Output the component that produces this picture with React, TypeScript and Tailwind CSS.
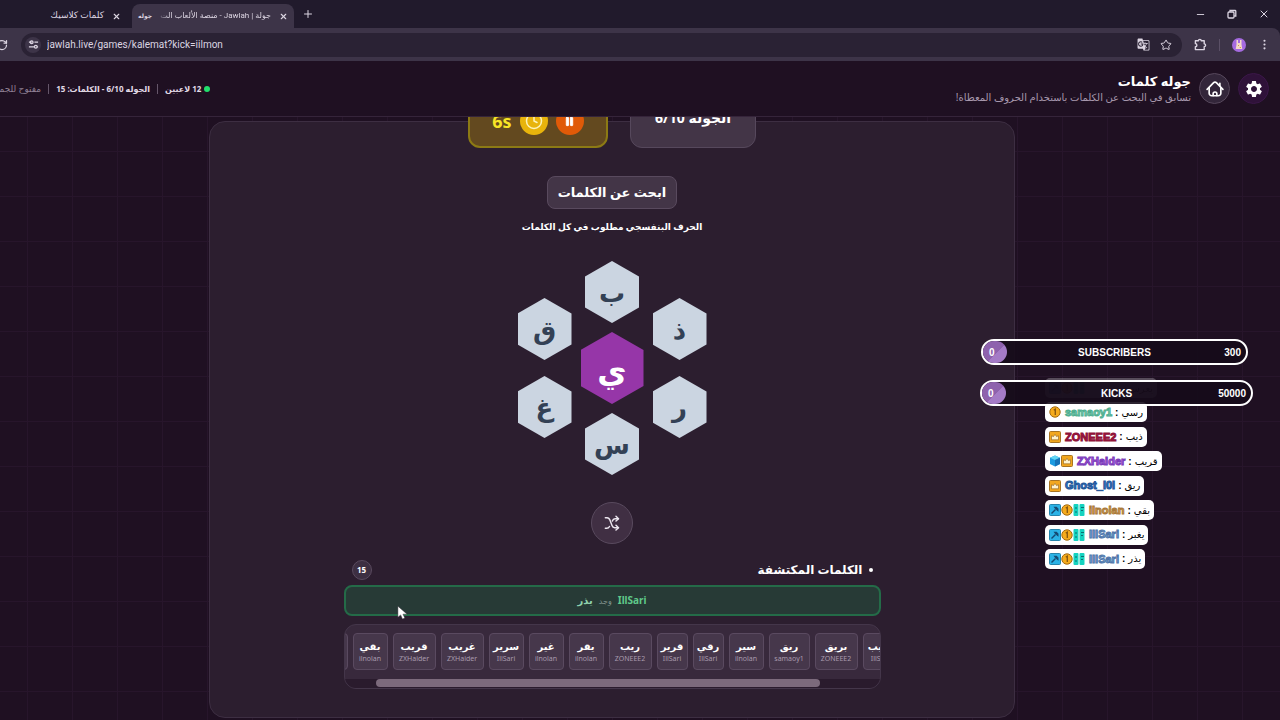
import type { ReactNode } from "react";
import { clsx } from "clsx";
import { Clock, Minus, MoreVertical, Pause, Plus, RotateCw, Star, X } from "lucide-react";
import { MdGTranslate, MdSettings } from "react-icons/md";

type FoundWord = { word: string; player: string; width: string };
type Badge = "coin" | "crown" | "cube" | "tool" | "sub";
type ChatMessage = { player: string; text: string; badges: Badge[]; color: string };

const foundWords: FoundWord[] = [
    { word: "بقر", player: "ilnolan", width: "w-[35px]" },
    { word: "بقي", player: "ilnolan", width: "w-[35px]" },
    { word: "قريب", player: "ZXHaider", width: "w-[43px]" },
    { word: "غريب", player: "ZXHaider", width: "w-[43px]" },
    { word: "سرير", player: "IllSari", width: "w-[35px]" },
    { word: "غير", player: "ilnolan", width: "w-[35px]" },
    { word: "يقر", player: "ilnolan", width: "w-[35px]" },
    { word: "ريب", player: "ZONEEE2", width: "w-[43px]" },
    { word: "قرير", player: "IllSari", width: "w-[31px]" },
    { word: "رقي", player: "IllSari", width: "w-[31px]" },
    { word: "سير", player: "ilnolan", width: "w-[35px]" },
    { word: "ريق", player: "samaoy1", width: "w-[41px]" },
    { word: "بريق", player: "ZONEEE2", width: "w-[43px]" },
    { word: "سيب", player: "IllSari", width: "w-[35px]" },
];

const messages: ChatMessage[] = [
    { player: "samaoy1", text: "رسي", badges: ["coin"], color: "text-[#8fdcc0] [-webkit-text-stroke:1px_#4fae90]" },
    { player: "ZONEEE2", text: "ذيب", badges: ["crown"], color: "text-[#b3123f] [-webkit-text-stroke:1px_#8c1238]" },
    { player: "ZXHaider", text: "قريب", badges: ["cube", "crown"], color: "text-[#b565f0] [-webkit-text-stroke:1px_#7a3bb8]" },
    { player: "Ghost_l0l", text: "ريق", badges: ["crown"], color: "text-[#2f7fd0] [-webkit-text-stroke:1px_#24579a]" },
    { player: "ilnolan", text: "بقي", badges: ["tool", "coin", "sub"], color: "text-[#f0b45c] [-webkit-text-stroke:1px_#a8793a]" },
    { player: "IllSari", text: "يغبر", badges: ["tool", "coin", "sub"], color: "text-[#86b4ea] [-webkit-text-stroke:1px_#5076a8]" },
    { player: "IllSari", text: "يذر", badges: ["tool", "coin", "sub"], color: "text-[#86b4ea] [-webkit-text-stroke:1px_#5076a8]" },
];

function HomeIcon() {
    return (
        <svg viewBox="0 0 24 24" className="size-[18px]" fill="none" stroke="currentColor" strokeWidth="2.2" strokeLinecap="round" strokeLinejoin="round" aria-hidden="true">
            <path d="M1.500 12.500 10.200 3.500a2.500 2.500 0 0 1 3.600 0l8.700 9" />
            <path d="M4.200 10.500v7.200A3.300 3.300 0 0 0 7.500 21h9a3.300 3.300 0 0 0 3.300-3.300v-7.200" />
            <path d="M18.500 8V4.500" />
            <path d="M9.500 20.800v-2.300a2.500 2.500 0 0 1 5 0v2.300" />
        </svg>
    );
}

function ShuffleIcon() {
    return (
        <svg viewBox="0 0 24 24" className="size-4" fill="none" stroke="currentColor" strokeWidth="2.2" strokeLinecap="round" strokeLinejoin="round" aria-hidden="true">
            <path d="M2 4h2.500c2.200 0 3.600 1.300 4.500 3.800l3 8c.8 2.200 2 3.200 4 3.200h5" />
            <path d="M2 20h2c2 0 3.300-.9 4.300-2.800" />
            <path d="M12.500 9c.8-2.200 2-3.500 4-3.500h5" />
            <path d="m18 2 3.800 3.500L18 9M18 15.500l3.800 3.500-3.800 3.500" />
        </svg>
    );
}

function ExtensionIcon() {
    return (
        <svg viewBox="0 0 14 14" className="size-[13px]" fill="none" stroke="currentColor" strokeWidth="1.500" strokeLinejoin="round" aria-hidden="true">
            <path d="M1.500 3h3.300a1.500 1.500 0 0 1 3 0h3.200v3.300a1.500 1.500 0 0 1 0 3V12.500H1.500V9.300a1.600 1.600 0 0 0 0-3.200z" />
        </svg>
    );
}

function BadgeIcon({ kind }: { kind: Badge }) {
    if (kind === "coin") {
        return (
            <svg viewBox="0 0 12 12" className="size-3" aria-hidden="true">
                <circle cx="6" cy="6" r="5.200" fill="#f5ab1c" stroke="#a36a10" strokeWidth="1" />
                <path d="M4.800 4.200 6.300 3.200V9" fill="none" stroke="#8a5a10" strokeWidth="1.400" />
            </svg>
        );
    }
    if (kind === "crown") {
        return (
            <svg viewBox="0 0 12 12" className="size-3" aria-hidden="true">
                <rect x=".5" y=".5" width="11" height="11" rx="1" fill="#f2a71f" stroke="#a87422" />
                <path d="M2.500 8.800V4.800l2 .8L6 3.300l1.500 2.300 2-.8v4z" fill="#fff3cf" stroke="#8a5d1c" strokeWidth=".6" />
            </svg>
        );
    }
    if (kind === "cube") {
        return (
            <svg viewBox="0 0 12 12" className="size-3" aria-hidden="true">
                <path d="m6 .5 5 2.300v6.200l-5 2.500L1 9V2.800z" fill="#1c9be0" />
                <path d="m6 .5 5 2.300L6 5 1 2.800z" fill="#63d6f5" />
                <path d="m6 5 5-2.200V9l-5 2.500z" fill="#1673b8" />
            </svg>
        );
    }
    if (kind === "tool") {
        return (
            <svg viewBox="0 0 12 12" className="size-3" aria-hidden="true">
                <rect x=".5" y=".5" width="11" height="11" rx="1" fill="#2bb3e6" stroke="#2585ad" />
                <path d="M2.500 9.500 6.500 5.500" stroke="#154a72" strokeWidth="1.500" />
                <path d="M4.500 2.800h3.200l1.800 2v3L7.800 6.500 6 4.800z" fill="#154a72" />
            </svg>
        );
    }
    return (
        <svg viewBox="0 0 12 12" className="size-3" aria-hidden="true">
            <rect x=".5" width="5" height="12" rx="1" fill="#14d3c0" />
            <rect x="6.500" width="5" height="12" rx="1" fill="#14d3c0" />
            <path d="M2 4h2M2 8h2M8 3.500h3M8 6.500h2" stroke="#0b6f72" strokeWidth="1.200" />
        </svg>
    );
}

function BrowserChrome() {
    return (
        <div className="shrink-0 bg-[#211a2c] font-[Roboto,'DejaVu_Sans',sans-serif] text-[#dcd5e2]">
            <div className="flex h-7 items-end">
                <div dir="rtl" className="flex h-6 w-[132px] shrink-0 items-center gap-1 pr-[11px] text-[9px]">
                    <button type="button" aria-label="Close tab"><X size={9} strokeWidth={3} /></button>
                    <span className="mr-1 whitespace-nowrap">كلمات كلاسيك</span>
                </div>
                <div dir="rtl" className="flex h-6 w-[162px] shrink-0 items-center rounded-t-lg bg-[#3d3448] px-[6px] text-[8px]">
                    <button type="button" aria-label="Close tab"><X size={9} strokeWidth={3} /></button>
                    <span className="mr-2 min-w-0 flex-1 overflow-hidden whitespace-nowrap [mask-image:linear-gradient(to_left,#000_88%,transparent)]">
                        جولة | Jawlah - منصة الألعاب الت
                    </span>
                    <span className="mr-1 text-[6px] leading-3 font-bold">جوله</span>
                </div>
                <button type="button" aria-label="New tab" className="mb-2 ml-2"><Plus size={12} /></button>
                <div className="mb-2 ml-auto flex items-center gap-[21px] pr-[10px]">
                    <button type="button" aria-label="Minimize"><Minus size={11} /></button>
                    <button type="button" aria-label="Restore">
                        <svg viewBox="0 0 10 10" className="size-[10px]" fill="none" stroke="currentColor" strokeWidth="1.300">
                            <rect x="1" y="3" width="6" height="6" rx="1" />
                            <path d="M3 2.800V1.500h5a.8.8 0 0 1 .8.8V7H7.200" />
                        </svg>
                    </button>
                    <button type="button" aria-label="Close"><X size={12} /></button>
                </div>
            </div>
            <div className="flex h-[33px] items-center rounded-tr-lg bg-[#3d3448]">
                <button type="button" aria-label="Reload" className="-ml-1"><RotateCw size={12} strokeWidth={2.5} /></button>
                <div className="ml-[13px] flex h-6 flex-1 items-center rounded-full bg-[#2a2234] pr-[10px] pl-1">
                    <span className="flex size-4 items-center justify-center rounded-full bg-[#3d3448]">
                        <svg viewBox="0 0 12 12" className="size-[11px]" fill="none" stroke="currentColor" strokeWidth="1.400">
                            <path d="M1 3.500h3M7 8.500H1M7 3.500h4M10 8.500h1" />
                            <circle cx="4" cy="3.500" r="1.500" />
                            <circle cx="8.500" cy="8.500" r="1.500" />
                        </svg>
                    </span>
                    <input
                        aria-label="Address"
                        defaultValue="jawlah.live/games/kalemat?kick=iilmon"
                        className="min-w-0 flex-1 bg-transparent pl-[6px] text-[10px] outline-none"
                    />
                    <button type="button" aria-label="Translate"><MdGTranslate size={13} /></button>
                    <button type="button" aria-label="Bookmark" className="ml-[10px]"><Star size={12} /></button>
                </div>
                <button type="button" aria-label="Extensions" className="ml-3"><ExtensionIcon /></button>
                <span className="mx-3 h-3 w-px bg-[#5b5066]" />
                <span className="flex size-[14px] items-center justify-center rounded-full bg-[#a56be0]">
                    <svg viewBox="0 0 10 10" className="size-[10px]">
                        <path d="M2.500 0h1.500v3h2V0h1.500v4.500l.8 4.500H1.700l.8-4.500z" fill="#f3d9c8" />
                        <path d="M4.200 5h.8v1h-.8zM5.800 7h1v1h-1z" fill="#c98a2c" />
                    </svg>
                </span>
                <button type="button" aria-label="Menu" className="mr-[9px] ml-3"><MoreVertical size={13} /></button>
            </div>
        </div>
    );
}

function GameHeader() {
    return (
        <header dir="rtl" className="flex h-14 shrink-0 items-center justify-between overflow-hidden border-b border-[#35243a] bg-[#1f1022] pr-[11px]">
            <div className="flex items-center gap-2">
                <button type="button" aria-label="الإعدادات" className="flex size-[31px] items-center justify-center rounded-full border border-[#3a1748] bg-[#2f1239] text-white">
                    <MdSettings size={20} />
                </button>
                <button type="button" aria-label="الرئيسية" className="flex size-[31px] items-center justify-center rounded-full border border-[#56475b] bg-[#33263a] text-white">
                    <HomeIcon />
                </button>
                <div>
                    <h1 className="text-[13px] leading-4 font-bold text-white">جوله كلمات</h1>
                    <p className="text-[10px] leading-4 text-[#a798ad]">تسابق في البحث عن الكلمات باستخدام الحروف المعطاة!</p>
                </div>
            </div>
            <div className="-ml-2 flex items-center gap-[7px] text-[8px] font-bold whitespace-nowrap text-[#e2dae6]">
                <span className="flex items-center gap-[3px]">
                    <span className="size-[6px] rounded-full bg-[#22e06c]" />
                    12 لاعبين
                </span>
                <span className="h-[10px] w-px bg-[#65566a]" />
                <span>الجوله 6/10 - الكلمات: 15</span>
                <span className="h-[10px] w-px bg-[#65566a]" />
                <span className="text-[9px] font-normal text-[#8f8095]">مفتوح للجميع</span>
            </div>
        </header>
    );
}

function Hexagon({ letter, center = false }: { letter: string; center?: boolean }) {
    return (
        <button
            type="button"
            className={clsx(
                "flex items-center justify-center font-bold [clip-path:polygon(50%_0,100%_25%,100%_75%,50%_100%,0_75%,0_25%)]",
                center ? "h-[72px] w-[63px] bg-[#9636a8] pt-1 text-[32px] text-white" : "h-[62px] w-[54px] bg-[#cbd5e1] text-[26px] leading-8 text-[#334155]",
            )}
        >
            {letter}
        </button>
    );
}

function LetterBoard() {
    return (
        <div className="mt-[26px] flex items-center gap-[9px]">
            <div className="flex flex-col gap-4">
                <Hexagon letter="ق" />
                <Hexagon letter="غ" />
            </div>
            <div className="flex flex-col items-center gap-[9px]">
                <Hexagon letter="ب" />
                <Hexagon letter="ي" center />
                <Hexagon letter="س" />
            </div>
            <div className="flex flex-col gap-4">
                <Hexagon letter="ذ" />
                <Hexagon letter="ر" />
            </div>
        </div>
    );
}

function FoundWords() {
    return (
        <section className="mt-[15px] w-full max-w-[537px]">
            <div dir="rtl" className="flex h-[22px] items-center justify-between px-2">
                <h2 className="flex items-center gap-[6px] text-xs font-bold text-white">
                    <span className="size-1 rounded-full bg-white" />
                    الكلمات المكتشفة
                </h2>
                <span className="flex size-5 items-center justify-center rounded-full border border-[#594a5e] bg-[#3d2f42] text-[8px] font-bold text-white">15</span>
            </div>
            <div className="mt-1 flex h-[31px] items-center justify-center gap-[6px] rounded-lg border-2 border-[#246b48] bg-[#273a36] text-[10px] font-bold text-[#8fd0ac]">
                <span>يذر</span>
                <span className="text-[8px] font-normal text-[#83958f]">وجد</span>
                <span className="text-[#5fc98a]">IllSari</span>
            </div>
            <div className="mt-2 h-[65px] overflow-hidden rounded-xl border border-[#44364a] bg-[#38293c]">
                <ul className="-ml-8 flex gap-[5px] pt-2">
                    {foundWords.map((found, index) => (
                        <li
                            key={index}
                            className={clsx(
                                "flex h-[37px] shrink-0 flex-col items-center justify-center rounded-sm border border-[#5a4a60] bg-[#46374b]",
                                found.width,
                            )}
                        >
                            <span className="text-[10px] leading-[14px] font-bold whitespace-nowrap text-white">{found.word}</span>
                            <span className="text-[7px] leading-3 text-[#a99cae]">{found.player}</span>
                        </li>
                    ))}
                </ul>
                <div className="mt-[9px] h-[9px] bg-[#2a1b2d] pr-[60px] pl-[31px]">
                    <div className="h-2 rounded-full bg-[#7c6a7c]" />
                </div>
            </div>
        </section>
    );
}

function GoalBar({ label, target, className }: { label: string; target: string; className?: string }) {
    return (
        <div className={clsx("grid h-[26px] grid-cols-[1fr_auto_1fr] items-center rounded-full border-2 border-white bg-[#150b1a]/90 font-['Liberation_Sans',sans-serif] text-[10px] font-bold text-white", className)}>
            <span className="flex h-[22px] w-6 items-center rounded-full bg-[linear-gradient(135deg,#8e62ad_55%,#a47bc6_55%)] pl-[6px]">0</span>
            <span>{label}</span>
            <span className="pr-[5px] text-right">{target}</span>
        </div>
    );
}

function ChatRow({ children, className }: { children: ReactNode; className?: string }) {
    return (
        <li className={clsx("flex h-5 items-center rounded-[5px] bg-white px-1 text-black", className)}>{children}</li>
    );
}

function StreamOverlay() {
    return (
        <aside className="absolute top-[339px] right-[27px] flex w-[273px] flex-col">
            <ul className="absolute top-[39px] left-[65px] flex h-[191px] flex-col items-start justify-between text-[10px] whitespace-nowrap">
                <ChatRow className="w-28 opacity-25">
                    <BadgeIcon kind="tool" />
                    <BadgeIcon kind="coin" />
                    <BadgeIcon kind="sub" />
                    <span className="ml-auto">يعرس</span>
                </ChatRow>
                {messages.map((message, index) => (
                    <ChatRow key={index}>
                        <span className="flex">
                            {message.badges.map((badge) => <BadgeIcon key={badge} kind={badge} />)}
                        </span>
                        <span className={clsx("ml-1 font-['Liberation_Sans',sans-serif] text-[11px] font-bold", message.color)}>{message.player}</span>
                        <span className="mx-[3px] font-['Liberation_Sans',sans-serif] font-bold">:</span>
                        <span>{message.text}</span>
                    </ChatRow>
                ))}
            </ul>
            <div className="relative flex flex-col gap-[15px]">
                <GoalBar label="SUBSCRIBERS" target="300" className="mr-[5px] ml-px" />
                <GoalBar label="KICKS" target="50000" />
            </div>
        </aside>
    );
}

export default function App() {
    return (
        <div className="relative flex h-screen flex-col overflow-hidden bg-[#1f1022] font-['Noto_Sans','DejaVu_Sans',sans-serif]">
            <BrowserChrome />
            <GameHeader />
            <main className="min-h-0 flex-1 overflow-hidden bg-[linear-gradient(#27152b_1px,transparent_1px),linear-gradient(90deg,#27152b_1px,transparent_1px)] bg-[size:45px_45px] bg-[position:27px_34px] pt-1 pr-14">
                <div className="mx-auto flex h-[597px] max-w-[806px] flex-col items-center rounded-2xl border border-[#3d2e42] bg-[#2c1e2f]">
                    <div className="-mt-9 flex h-[62px] shrink-0 gap-[22px] font-bold">
                        <div className="flex w-[140px] items-center justify-center gap-2 rounded-xl border-2 border-[#8c7a14] bg-[#63491f] pt-2 text-lg text-[#f7e426]">
                            <span>6s</span>
                            <span className="flex size-7 items-center justify-center rounded-full bg-[#e8b40c] text-[#fdf3b8]"><Clock size={18} /></span>
                            <button type="button" aria-label="إيقاف" className="flex size-7 items-center justify-center rounded-full bg-[#e05a08] text-white"><Pause size={11} fill="currentColor" /></button>
                        </div>
                        <div dir="rtl" className="flex w-[126px] items-center justify-center rounded-xl border border-[#56485c] bg-[#433547] pt-[2px] text-sm text-white">
                            الجوله 6/10
                        </div>
                    </div>
                    <h2 dir="rtl" className="mt-7 flex h-[33px] items-center rounded-lg border border-[#594a5e] bg-[#433547] px-[10px] text-[13px] font-bold text-white">ابحث عن الكلمات</h2>
                    <p dir="rtl" className="mt-[10px] text-[9px] leading-4 font-bold text-white">الحرف البنفسجي مطلوب في كل الكلمات</p>
                    <LetterBoard />
                    <button type="button" aria-label="خلط الحروف" className="mt-[27px] flex size-[42px] shrink-0 items-center justify-center rounded-full border border-[#594a5e] bg-[#402f43] text-[#ece6ef]">
                        <ShuffleIcon />
                    </button>
                    <FoundWords />
                </div>
            </main>
            <StreamOverlay />
            <svg viewBox="0 0 12 16" className="absolute top-[606px] left-[397px] h-[15px] w-[11px]" aria-hidden="true">
                <path d="M1 0v12l3-2.500L6 14l2.500-1-2-4.300H11z" fill="#fff" stroke="#3b3440" strokeWidth=".5" />
            </svg>
        </div>
    );
}
